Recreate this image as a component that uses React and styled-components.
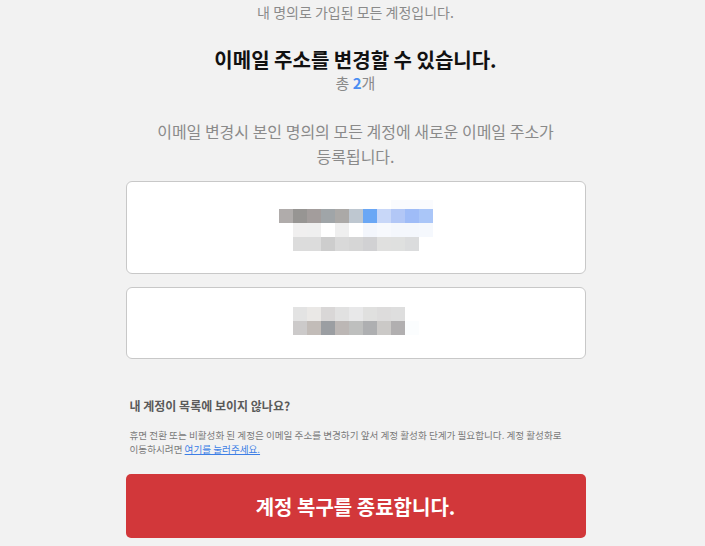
import styled, { createGlobalStyle } from "styled-components";

const GlobalStyle = createGlobalStyle`
  html, body {
    margin: 0;
    padding: 0;
    background: #f2f2f2;
  }
  body {
    font-family: "Noto Sans CJK KR", "Noto Sans", sans-serif;
  }
`

const Screen = styled.div`
  padding-left: 6px;
`
const Page = styled.div`
  width: 460px;
  margin: 0 auto;
  padding-top: 2px;
  display: flex;
  flex-direction: column;
  align-items: stretch;
  text-align: center;
`
const Lead = styled.p`
  margin: 0;
  font-size: 14px;
  line-height: 20px;
  color: #8a8a8a;
`
const Heading = styled.h2`
  margin: 25px 0 0;
  font-size: 20px;
  line-height: 25px;
  font-weight: 700;
  color: #111;
`
const Count = styled.p`
  margin: 0;
  font-size: 15px;
  line-height: 22px;
  color: #8a8a8a;
  b {
    color: #4a8ef2;
    font-weight: 700;
  }
`
const Notice = styled.p`
  margin: 25px auto 0;
  max-width: 408px;
  font-size: 16px;
  line-height: 25px;
  color: #8a8a8a;
`
const List = styled.div`
  margin-top: 12px;
  display: flex;
  flex-direction: column;
  gap: 13px;
`
const Card = styled.div`
  height: ${p => p.$h}px;
  box-sizing: border-box;
  background: #fff;
  border: 1px solid #c8c8c8;
  border-radius: 6px;
  display: flex;
  align-items: center;
  justify-content: center;
`
const Help = styled.div`
  margin-top: 38px;
  text-align: left;
  padding-left: 4px;
`
const HelpTitle = styled.h3`
  margin: 0;
  font-size: 12px;
  line-height: 18px;
  font-weight: 700;
  color: #5a5a5a;
`
const HelpText = styled.p`
  margin: 13px 0 0;
  max-width: 440px;
  font-size: 9.6px;
  line-height: 14px;
  color: #7a7a7a;
  a {
    color: #3d7fe6;
    text-decoration: underline;
  }
`
const EndButton = styled.button`
  margin-top: 18px;
  height: 64px;
  border: none;
  border-radius: 5px;
  background: #d2373a;
  color: #fff;
  font-family: inherit;
  font-size: 20px;
  font-weight: 700;
  cursor: pointer;
`

// 가려진 계정 정보 (모자이크)
const mosaicA = [
  { y: 0, h: 9, cells: [null, null, null, null, null, null, null, null, "#fafbfe", "#fafbfe", "#fafbfe"] },
  { y: 9, h: 14, cells: ["#b0acab", "#979593", "#a39d9c", "#a0a5a8", "#aba9a7", "#bec7d0", "#6aa7f5", "#c8d7f8", "#b2c7f6", "#9fbcf7", "#aac6f8"] },
  { y: 23, h: 14, cells: [null, "#f0efef", "#efefef", null, "#efefef", null, "#f3f6fc", "#f7f9fd", "#f4f7fc", "#f4f7fc", "#f5f8fd"] },
  { y: 37, h: 14, cells: [null, "#dcdcdc", "#dcdcdc", "#cdcdcd", "#d9d9d9", "#d6d6d6", "#d1d1d3", "#e0e0df", "#dfe0df", "#dbdcdd", null] },
]
const mosaicB = [
  { y: 0, h: 14, cells: ["#e3e3e3", "#eae8e6", "#d9d7d7", "#e1e1e1", "#e8e8e9", "#e0e0df", "#dddcdc", "#dedede", null] },
  { y: 14, h: 14, cells: ["#cccaca", "#c2bcb8", "#9b9ea2", "#bcb7b5", "#bebfbe", "#aeafb1", "#cbc9c7", "#b1afb0", "#fbfdfe"] },
]

const Mosaic = ({ rows, width, height, lift = 0 }) => (
  <svg width={width} height={height} viewBox={`0 0 ${width} ${height}`} style={{ marginTop: -lift }}>
    {rows.map(r =>
      r.cells.map((c, i) =>
        c ? <rect key={`${r.y}-${i}`} x={i * 14} y={r.y} width="14" height={r.h} fill={c} /> : null
      )
    )}
  </svg>
)

const App = () => (
  <Screen>
    <GlobalStyle />
    <Page>
      <Lead>내 명의로 가입된 모든 계정입니다.</Lead>
      <Heading>이메일 주소를 변경할 수 있습니다.</Heading>
      <Count>총 <b>2</b>개</Count>
      <Notice>이메일 변경시 본인 명의의 모든 계정에 새로운 이메일 주소가 등록됩니다.</Notice>
      <List>
        <Card $h={93}>
          <Mosaic rows={mosaicA} width={154} height={51} lift={4} />
        </Card>
        <Card $h={72}>
          <Mosaic rows={mosaicB} width={126} height={28} lift={4} />
        </Card>
      </List>
      <Help>
        <HelpTitle>내 계정이 목록에 보이지 않나요?</HelpTitle>
        <HelpText>
          휴면 전환 또는 비활성화 된 계정은 이메일 주소를 변경하기 앞서 계정 활성화 단계가 필요합니다. 계정 활성화로
          이동하시려면 <a href="#">여기를 눌러주세요.</a>
        </HelpText>
      </Help>
      <EndButton>계정 복구를 종료합니다.</EndButton>
    </Page>
  </Screen>
)

export default App
